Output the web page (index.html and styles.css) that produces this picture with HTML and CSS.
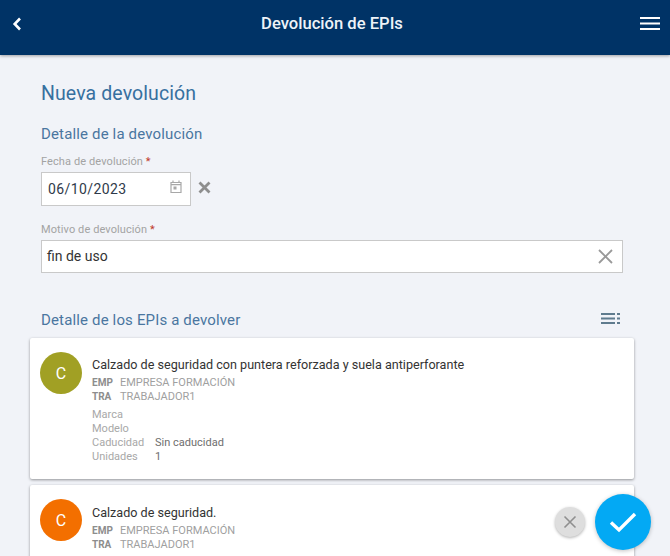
FILE: index.html
```html
<!DOCTYPE html>
<html lang="es">
<head>
<meta charset="utf-8">
<title>Devolución de EPIs</title>
<link rel="stylesheet" href="styles.css">
</head>
<body>
<header class="topbar">
  <svg class="back" width="10" height="14" viewBox="0 0 10 14"><path d="M8 1.5 2.7 7 8 12.5" fill="none" stroke="#fff" stroke-width="2.6"/></svg>
  <h1>Devolución de EPIs</h1>
  <svg class="menu" width="20" height="13" viewBox="0 0 20 13"><path d="M0 1h20M0 6.5h20M0 12h20" stroke="#fff" stroke-width="2"/></svg>
</header>
<main class="content">
  <section class="form">
    <h2 class="title">Nueva devolución</h2>
    <h3 class="subtitle first">Detalle de la devolución</h3>
    <label class="label">Fecha de devolución <span class="req">*</span></label>
    <div class="date-row">
      <div class="field date">
        <span class="date-text">06/10/2023</span>
        <svg class="cal" width="12" height="13" viewBox="0 0 12 13"><path d="M1 2.5h10v10H1zM1 4.700h10M3 .5v2.200M9 .5v2.200" fill="none" stroke="#a8a8a8" stroke-width="1.200"/><rect x="3.500" y="6.500" width="3" height="3" fill="#a8a8a8"/></svg>
      </div>
      <svg class="clear-date" width="13" height="13" viewBox="0 0 13 13"><path d="M1.500 1.500l10 10M11.500 1.500l-10 10" stroke="#8e8e8e" stroke-width="2.800"/></svg>
    </div>
    <label class="label second">Motivo de devolución <span class="req">*</span></label>
    <div class="field motive">
      <span>fin de uso</span>
      <svg width="15" height="15" viewBox="0 0 15 15"><path d="M1 1l13 13M14 1 1 14" stroke="#999" stroke-width="1.800"/></svg>
    </div>
    <div class="list-head">
      <h3 class="subtitle">Detalle de los EPIs a devolver</h3>
      <svg width="19" height="11" viewBox="0 0 19 11"><path d="M0 1h14M0 5.500h14M0 10h14M16 1h3M16 5.500h3M16 10h3" stroke="#5f7b8e" stroke-width="2"/></svg>
    </div>
  </section>
  <article class="card">
    <div class="avatar olive">C</div>
    <div class="info">
      <p class="name">Calzado de seguridad con puntera reforzada y suela antiperforante</p>
      <p class="meta"><b>EMP</b><span>EMPRESA FORMACIÓN</span></p>
      <p class="meta"><b>TRA</b><span>TRABAJADOR1</span></p>
      <dl class="details">
        <dt>Marca</dt><dd></dd>
        <dt>Modelo</dt><dd></dd>
        <dt>Caducidad</dt><dd>Sin caducidad</dd>
        <dt>Unidades</dt><dd>1</dd>
      </dl>
    </div>
  </article>
  <article class="card">
    <div class="avatar orange">C</div>
    <div class="info">
      <p class="name">Calzado de seguridad.</p>
      <p class="meta"><b>EMP</b><span>EMPRESA FORMACIÓN</span></p>
      <p class="meta"><b>TRA</b><span>TRABAJADOR1</span></p>
    </div>
  </article>
</main>
<button class="fab-cancel" aria-label="Cancelar"><svg width="14" height="14" viewBox="0 0 14 14"><path d="M1.500 1.500l11 11M12.500 1.500l-11 11" stroke="#8f8f8f" stroke-width="1.600"/></svg></button>
<button class="fab-ok" aria-label="Aceptar"><svg width="28" height="22" viewBox="0 0 28 22"><path d="M2 11.500 10 19 26 3" fill="none" stroke="#fff" stroke-width="3.400"/></svg></button>
</body>
</html>
```
FILE: styles.css
```css
* { box-sizing: border-box; }
html, body { margin: 0; height: 556px; overflow: hidden; }
body { background: #f1f3f8; font-family: Roboto, "Liberation Sans", sans-serif; color: #333; position: relative; }
.topbar { height: 55px; background: #003366; box-shadow: 0 1px 3px rgba(0,0,0,.35); display: flex; align-items: center; justify-content: space-between; padding: 0 10px 8px 12px; position: relative; }
.topbar h1 { margin: 0; font-size: 16.600px; font-weight: 500; color: #eef3f8; line-height: 20px; }
.back { margin-right: 2px; }
.content { padding: 0 36px 0 30px; }
.form { padding: 0 11px; }
.title { margin: 0; padding-top: 27px; font-size: 19.500px; line-height: 24px; font-weight: 400; color: #37709f; letter-spacing: .1px; }
.subtitle { margin: 0; font-size: 15px; line-height: 20px; font-weight: 400; color: #4a76a0; letter-spacing: .15px; }
.subtitle.first { margin-top: 18px; }
.label { display: block; font-size: 11px; line-height: 14px; color: #a3a3a3; letter-spacing: .1px; }
.first + .label { margin-top: 11px; }
.label.second { margin-top: 17px; }
.req { color: #c0392b; }
.date-row { display: flex; align-items: center; gap: 7px; margin-top: 3px; }
.field { background: #fff; border: 1px solid #c9c9c9; display: flex; align-items: center; justify-content: space-between; font-size: 14px; color: #333; }
.date { width: 150px; height: 34px; padding: 0 8px 0 6px; }
.date-text { letter-spacing: .4px; color: #2f3a4a; }
.cal { margin-bottom: 6px; }
.clear-date { margin-bottom: 4px; }
.motive { height: 33px; margin-top: 3px; padding: 0 9px 2px 5px; }
.motive svg { margin-top: 2px; }
.list-head { display: flex; align-items: center; justify-content: space-between; margin-top: 37px; height: 20px; padding-right: 3px; }
.list-head svg { margin-top: -4px; }
.card { background: #fff; border-radius: 2px; box-shadow: 0 1px 3px rgba(0,0,0,.4); display: flex; gap: 10px; padding: 14px 10px 15px; margin-top: 8px; }
.card + .card { margin-top: 6px; }
.avatar { width: 42px; height: 42px; flex: none; border-radius: 50%; color: #fff; display: flex; align-items: center; justify-content: center; font-size: 16px; }
.olive { background: #a1a024; }
.orange { background: #f36f00; }
.info { padding-top: 5px; }
.card + .card .info { padding-top: 6px; }
.name { margin: 0 0 3px; font-size: 12.600px; line-height: 16px; color: #333; }
.meta { margin: 0; font-size: 11px; line-height: 14px; color: #a0a0a0; display: flex; }
.meta b { width: 28px; font-size: 10px; font-weight: 700; color: #8d8d8d; }
.details { margin: 4px 0 0; display: grid; grid-template-columns: 63px 1fr; font-size: 11px; line-height: 14px; color: #a8a8a8; }
.details dd { margin: 0; color: #6e6e6e; }
.fab-cancel, .fab-ok { position: absolute; border: 0; border-radius: 50%; padding: 0; display: flex; align-items: center; justify-content: center; }
.fab-cancel { left: 555px; top: 507px; width: 30px; height: 30px; background: #dedede; box-shadow: 0 1px 3px rgba(0,0,0,.3); }
.fab-ok { left: 595px; top: 494px; width: 56px; height: 56px; background: #03a9f4; box-shadow: 0 1px 4px rgba(0,0,0,.25); }
```
